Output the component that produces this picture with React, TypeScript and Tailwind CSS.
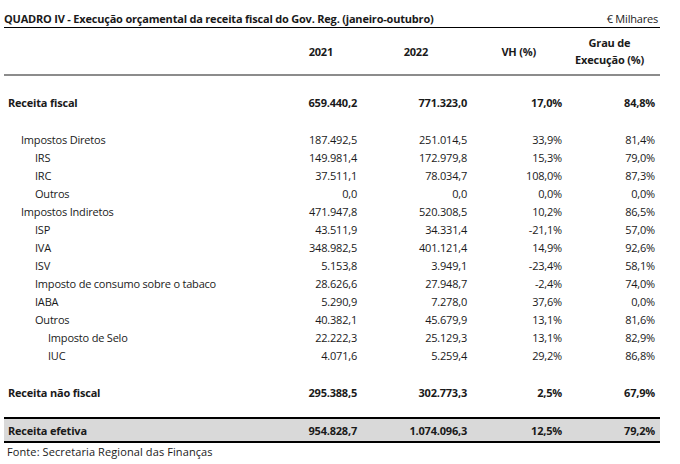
const rows: { label: string; level: number; v: string[] }[] = [
  { label: 'Impostos Diretos', level: 1, v: ['187.492,5', '251.014,5', '33,9%', '81,4%'] },
  { label: 'IRS', level: 2, v: ['149.981,4', '172.979,8', '15,3%', '79,0%'] },
  { label: 'IRC', level: 2, v: ['37.511,1', '78.034,7', '108,0%', '87,3%'] },
  { label: 'Outros', level: 2, v: ['0,0', '0,0', '0,0%', '0,0%'] },
  { label: 'Impostos Indiretos', level: 1, v: ['471.947,8', '520.308,5', '10,2%', '86,5%'] },
  { label: 'ISP', level: 2, v: ['43.511,9', '34.331,4', '-21,1%', '57,0%'] },
  { label: 'IVA', level: 2, v: ['348.982,5', '401.121,4', '14,9%', '92,6%'] },
  { label: 'ISV', level: 2, v: ['5.153,8', '3.949,1', '-23,4%', '58,1%'] },
  { label: 'Imposto de consumo sobre o tabaco', level: 2, v: ['28.626,6', '27.948,7', '-2,4%', '74,0%'] },
  { label: 'IABA', level: 2, v: ['5.290,9', '7.278,0', '37,6%', '0,0%'] },
  { label: 'Outros', level: 2, v: ['40.382,1', '45.679,9', '13,1%', '81,6%'] },
  { label: 'Imposto de Selo', level: 3, v: ['22.222,3', '25.129,3', '13,1%', '82,9%'] },
  { label: 'IUC', level: 3, v: ['4.071,6', '5.259,4', '29,2%', '86,8%'] },
];

const indent = ['pl-[4px]', 'pl-[17px]', 'pl-[31px]', 'pl-[44px]'];
const cols = 'grid grid-cols-[253px_100px_110px_95px_93px]';

function Row({ label, level, v, bold }: { label: string; level: number; v: string[]; bold?: boolean }) {
  return (
    <div className={`${cols} h-[18px] items-center ${bold ? 'font-bold' : ''}`}>
      <div className={indent[level]}>{label}</div>
      {v.map((x, i) => (
        <div key={i} className="text-right">{x}</div>
      ))}
    </div>
  );
}

export default function App() {
  return (
    <div className="w-[680px] h-[464px] bg-white text-[#1a1a1a] text-[11px] leading-none font-['Open_Sans','Liberation_Sans',sans-serif] tracking-[-0.2px]">
      <div className="pl-[4px] pr-[20px] pt-[12px]">
        <div className="flex justify-between items-end h-[16px] border-b border-black pb-[3px]">
          <div className="font-bold">QUADRO IV - Execução orçamental da receita fiscal do Gov. Reg. (janeiro-outubro)</div>
          <div className="pr-[2px]">€ Milhares</div>
        </div>

        <div className={`${cols} h-[48px] items-center font-bold border-b-2 border-[#8c8c8c]`}>
          <div />
          <div className="text-right pr-[24px]">2021</div>
          <div className="text-right pr-[39px]">2022</div>
          <div className="text-right pr-[26px]">VH (%)</div>
          <div className="text-center leading-[17px] pl-[2px]">Grau de<br />Execução (%)</div>
        </div>

        <div className="pt-[17px]">
          <Row label="Receita fiscal" level={0} v={['659.440,2', '771.323,0', '17,0%', '84,8%']} bold />
        </div>

        <div className="pt-[19px]">
          {rows.map((r, i) => (
            <Row key={i} {...r} />
          ))}
        </div>

        <div className="pt-[19px]">
          <Row label="Receita não fiscal" level={0} v={['295.388,5', '302.773,3', '2,5%', '67,9%']} bold />
        </div>

        <div className="mt-[16px] bg-[#d9d9d9] border-t-2 border-b-2 border-black h-[26px] flex items-center">
          <div className="w-full">
            <Row label="Receita efetiva" level={0} v={['954.828,7', '1.074.096,3', '12,5%', '79,2%']} bold />
          </div>
        </div>

        <div className="pt-[3px] pl-[3px] tracking-[0.1px]">Fonte: Secretaria Regional das Finanças</div>
      </div>
    </div>
  );
}
